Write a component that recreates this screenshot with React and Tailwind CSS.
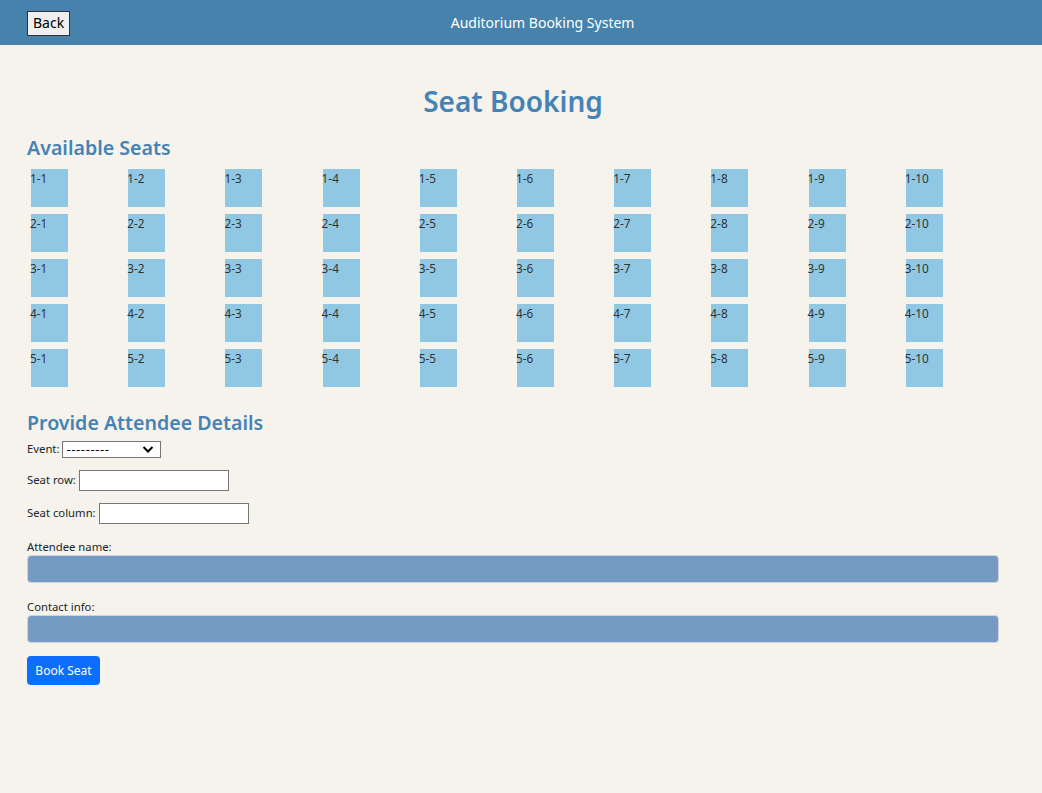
const rows = [1, 2, 3, 4, 5];
const cols = [1, 2, 3, 4, 5, 6, 7, 8, 9, 10];

export default function App() {
  return (
    <div className="min-h-[793px] bg-[#f5f3ec] text-[#212529] font-['Segoe_UI','Noto_Sans',sans-serif]">
      <header className="h-[45px] bg-[#4682ab] flex items-center px-[27px]">
        <button className="border border-[#333] bg-[#efefef] text-black text-[14px] leading-none px-[5px] h-[25px] mt-[1px]">
          Back
        </button>
        <div className="flex-1 text-center text-white text-[14px] leading-[20px]">
          Auditorium Booking System
        </div>
      </header>

      <main className="px-[27px]">
        <h1 className="text-center text-[#4682b4] text-[28px] font-semibold leading-[36px] mt-[38px] pr-[16px]">
          Seat Booking
        </h1>

        <h2 className="text-[#4682b4] text-[19.6px] font-semibold leading-[26px] mt-[16px]">
          Available Seats
        </h2>
        <div className="grid grid-cols-[repeat(10,97.2px)] gap-y-[7px] mt-[8px] ml-[4px]">
          {rows.map((r) =>
            cols.map((c) => (
              <div
                key={`${r}-${c}`}
                className="w-[37px] h-[38px] bg-[#90c8e4] text-[11.8px] leading-[19px] text-[#333] -indent-[1px]"
              >
                {r}-{c}
              </div>
            ))
          )}
        </div>

        <h2 className="text-[#4682b4] text-[19.6px] font-semibold leading-[26px] mt-[23px]">
          Provide Attendee Details
        </h2>
        <form className="text-[11.3px] text-[#212529]">
          <div className="flex items-center gap-[3px] mt-[5px]">
            <label>Event:</label>
            <div className="relative w-[99px] h-[17px] border border-[#767676] bg-white">
              <span className="absolute left-[3px] top-[-2px] text-[13px] tracking-[0.6px] text-black">---------</span>
              <svg className="absolute right-[6px] top-[3px]" width="12" height="9" viewBox="0 0 12 9">
                <path d="M1.5 2 L6 6.5 L10.5 2" stroke="#000" strokeWidth="2" fill="none" />
              </svg>
            </div>
          </div>
          <div className="flex items-center gap-[3px] mt-[12px]">
            <label>Seat row:</label>
            <input className="w-[150px] h-[21px] border border-[#767676] bg-white outline-none" />
          </div>
          <div className="flex items-center gap-[3px] mt-[12px]">
            <label>Seat column:</label>
            <input className="w-[150px] h-[21px] border border-[#767676] bg-white outline-none" />
          </div>
          <div className="mt-[14px]">
            <label className="block leading-[16px] translate-y-[1px]">Attendee name:</label>
            <input className="block w-[972px] h-[28px] mt-[1px] rounded-[4px] border border-[#ced4da] bg-[#759bc3] outline-none" />
          </div>
          <div className="mt-[15px]">
            <label className="block leading-[16px] translate-y-[1px]">Contact info:</label>
            <input className="block w-[972px] h-[28px] mt-[1px] rounded-[4px] border border-[#ced4da] bg-[#759bc3] outline-none" />
          </div>
          <button
            type="button"
            className="mt-[13px] h-[29px] w-[73px] rounded-[4px] bg-[#0d6efd] text-white text-[12px]"
          >
            Book Seat
          </button>
        </form>
      </main>
    </div>
  );
}
